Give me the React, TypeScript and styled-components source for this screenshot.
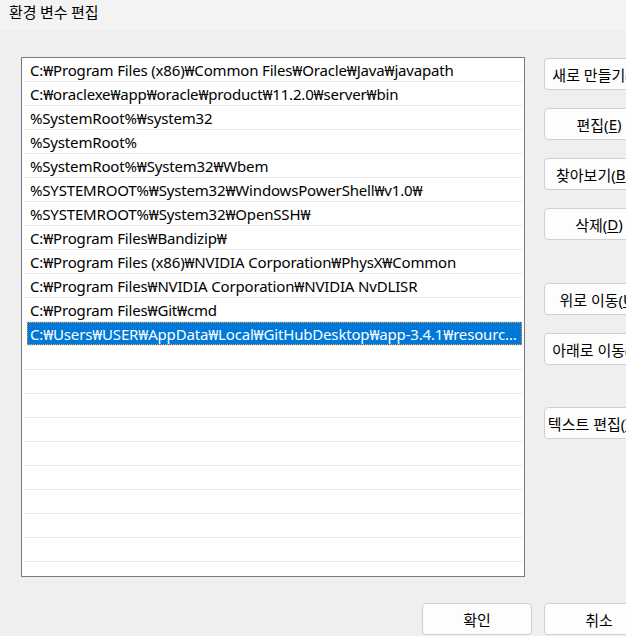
import React from 'react';
import styled, { createGlobalStyle } from 'styled-components';

const GlobalStyle = createGlobalStyle`
  html, body {
    margin: 0;
    padding: 0;
    background: #efefef;
    overflow: hidden;
  }
  body {
    font-family: "Noto Sans", "Noto Sans CJK KR", sans-serif;
    font-size: 15px;
    color: #000;
  }
`;

const Dialog = styled.div`
  width: 666px;
  height: 636px;
  background: #efefef;
  display: flex;
  flex-direction: column;
`;

const TitleBar = styled.div`
  height: 30px;
  box-sizing: border-box;
  padding: 1px 0 0 9px;
  background: #f3f3f3;
  line-height: 22px;
  font-family: "Noto Sans CJK KR", sans-serif;
  font-size: 15px;
`;

const Content = styled.div`
  display: flex;
  padding: 27px 12px 0 21px;
  gap: 19px;
`;

const List = styled.div`
  width: 504px;
  height: 520px;
  box-sizing: border-box;
  border: 1px solid #7a7a80;
  background: #fff;
  padding: 0 1px;
  overflow: hidden;
`;

const Row = styled.div`
  height: 24px;
  box-sizing: border-box;
  border-bottom: 1px solid #ebebeb;
  padding: 0 0 0 4px;
  display: flex;
  align-items: center;
`;

const Cell = styled.div<{ $selected?: boolean }>`
  flex: 1;
  min-width: 0;
  height: 23px;
  box-sizing: border-box;
  padding: 2px 0 0 3px;
  margin-right: 1px;
  line-height: 21px;
  letter-spacing: -0.17px;
  white-space: nowrap;
  overflow: hidden;
  text-overflow: ellipsis;
  background: ${p => (p.$selected ? '#0078d7' : 'transparent')};
  color: ${p => (p.$selected ? '#fff' : '#000')};
  outline: ${p => (p.$selected ? '1px dotted #f0a040' : 'none')};
  outline-offset: -1px;
`;

const Side = styled.div`
  display: flex;
  flex-direction: column;
  padding-top: 1px;
`;

const Button = styled.button<{ $space?: number }>`
  width: 110px;
  height: 32px;
  margin-top: ${p => p.$space ?? 0}px;
  box-sizing: border-box;
  border: 1px solid #d0d0d0;
  border-radius: 4px;
  background: #fdfdfd;
  font-family: "Noto Sans", "Noto Sans CJK KR", sans-serif;
  font-size: 15px;
  color: #000;
  padding: 0;
  white-space: nowrap;
  display: flex;
  justify-content: center;
  align-items: center;
  overflow: visible;
  u {
    text-underline-offset: 2px;
  }
`;

const Footer = styled.div`
  display: flex;
  justify-content: flex-end;
  gap: 12px;
  padding: 26px 12px 0 0;
`;

const paths = [
  'C:₩Program Files (x86)₩Common Files₩Oracle₩Java₩javapath',
  'C:₩oraclexe₩app₩oracle₩product₩11.2.0₩server₩bin',
  '%SystemRoot%₩system32',
  '%SystemRoot%',
  '%SystemRoot%₩System32₩Wbem',
  '%SYSTEMROOT%₩System32₩WindowsPowerShell₩v1.0₩',
  '%SYSTEMROOT%₩System32₩OpenSSH₩',
  'C:₩Program Files₩Bandizip₩',
  'C:₩Program Files (x86)₩NVIDIA Corporation₩PhysX₩Common',
  'C:₩Program Files₩NVIDIA Corporation₩NVIDIA NvDLISR',
  'C:₩Program Files₩Git₩cmd',
  'C:₩Users₩USER₩AppData₩Local₩GitHubDesktop₩app-3.4.1₩resources₩app₩git₩cmd',
];

const TOTAL_ROWS = 22;
const SELECTED = 11;

const App: React.FC = () => {
  const rows = Array.from({ length: TOTAL_ROWS }, (_, i) => paths[i] ?? '');

  return (
    <>
      <GlobalStyle />
      <Dialog>
        <TitleBar>환경 변수 편집</TitleBar>
        <Content>
          <List>
            {rows.map((text, i) => (
              <Row key={i}>
                <Cell $selected={i === SELECTED}>{text}</Cell>
              </Row>
            ))}
          </List>
          <Side>
            <Button>새로 만들기(<u>N</u>)</Button>
            <Button $space={18}>편집(<u>E</u>)</Button>
            <Button $space={18}>찾아보기(<u>B</u>)...</Button>
            <Button $space={18}>삭제(<u>D</u>)</Button>
            <Button $space={43}>위로 이동(<u>U</u>)</Button>
            <Button $space={18}>아래로 이동(<u>O</u>)</Button>
            <Button $space={42}>텍스트 편집(<u>T</u>)...</Button>
          </Side>
        </Content>
        <Footer>
          <Button>확인</Button>
          <Button>취소</Button>
        </Footer>
      </Dialog>
    </>
  );
};

export default App;
